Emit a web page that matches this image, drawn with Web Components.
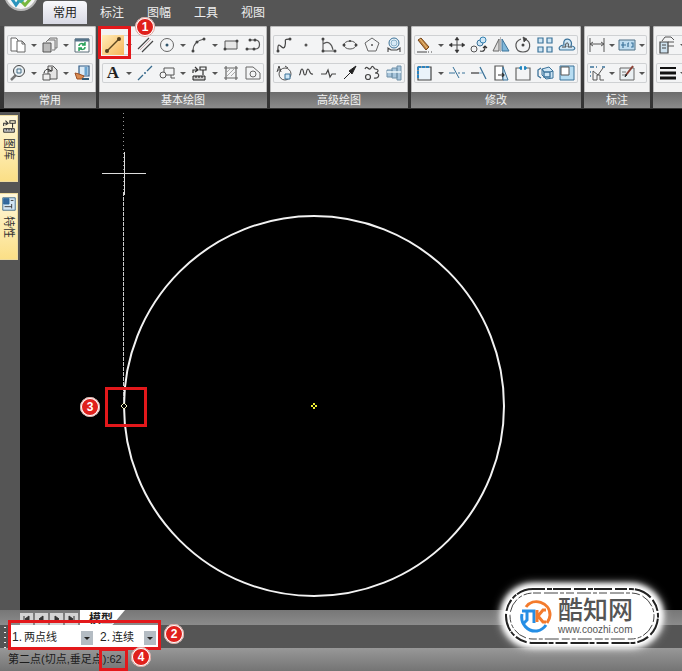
<!DOCTYPE html>
<html lang="zh-CN">
<head>
<meta charset="utf-8">
<title>CAD</title>
<style>
html,body{height:100%}
body{margin:0;background:#000;font:12px/16px "Liberation Sans","Noto Sans CJK SC",sans-serif;color:#222;overflow:hidden}
</style>
</head>
<body>
<cad-app></cad-app>
<script>
const B='#3b7299', L='#cfe6f5', K='#444';
const s=(d,c=K,w=1,f='none')=>`<path d="${d}" fill="${f}" stroke="${c}" stroke-width="${w}"/>`;
const dot=(x,y,c=K,r=1.5)=>`<circle cx="${x}" cy="${y}" r="${r}" fill="${c}"/>`;
const ICONS={
 copy:s('M2 2h5l2 2v11H2z','#666',1,'#fff')+s('M8 5h5l3 3v8H8zM13 5v3h3','#666',1,'#fff'),
 paste:s('M7 4l2-2h7v10h-3','#777',1,'#ddd')+s('M5 6l2-2h7v10h-3','#777',1,'#eee')+s('M2 7h8v9H2z','#555',1,'#bbb'),
 refresh:s('M2 3h14v13H2z','#5a6c78',1,'#fff')+s('M2 4h14','#56748a',3)+s('M6 10c0-3 4-3 6-1M12 6v3H9M12 11c0 3-4 3-6 1M6 15v-3h3','#2ba35c',1.5),
 zoom:s('M2 16l5-5','#777',2.5)+`<circle cx="10" cy="7" r="5.5" fill="#e8eff3" stroke="#444"/>`+s('M8 5h4v4H8z','#456d85'),
 pages:s('M7 2h5l4 4v9H7z','#555',1,'#e4e4e4')+s('M2 10h7v6H2z','#555',1,'#eee')+s('M3 9c1-4 4-5 7-2M11 3v4H7','#222',1),
 display:s('M6 2h10v10H6z','#315b85',1.2,'#dbeaf5')+s('M13 3v8','#6aa5d1',3)+s('M2 9l4 1 5 2-2 3H4z','#9d5025',1,'#d98b51')+s('M9 15h7','#345b77',2),
 line:s('M3 15L15 3','#5c4820',1.5)+dot(3,15,'#54401c',2)+dot(15,3,'#54401c',2),
 parallel:s('M2 13L13 2M6 16L17 5','#444',1.2)+s('M4 14L15 3','#bf8d91',.7),
 circle:`<circle cx="9" cy="9" r="6.5" fill="none" stroke="#666"/>`+dot(9,9,'#31566d'),
 arc:s('M3 15C3 8 8 4 14 3','#555',1.1)+dot(3,15)+dot(7,6)+dot(14,3),
 rect:s('M3 5h12v8H3z','#555',1,'#e7e7e7')+dot(3,13)+dot(15,5),
 poly:s('M6 4h5c6 0 6 9 0 9H3','#555',1.2)+dot(6,4)+dot(11,4)+dot(3,13)+dot(10,13),
 text:`<text x="9" y="14" text-anchor="middle" font-family="Liberation Serif,serif" font-weight="bold" font-size="17" fill="#222">A</text>`,
 center:s('M2 16L7 11M11 7l5-5','#35688b',1.3)+dot(9,9,'#35688b',1),
 block:s('M6 4h10v7H6z','#555')+`<circle cx="5" cy="11" r="3" fill="#f5f5f5" stroke="#555"/>`+s('M13 11v3h4','#555'),
 library:s('M3 12h12v4H3z','#222',1,'#ccc')+s('M3 9V6h4M5 3l3 3-3 2M10 3h6v3h-6zM13 6v5M6 12v2M9 12v2M12 12v2','#333',1.2),
 hatch:s('M4 2v14M14 2v14M2 4h14M2 14h14','#666',1.2)+s('M5 12l7-7M5 8l3-3M9 12l4-4','#888',.7),
 region:s('M2 15V3h7l7 6v6z','#666')+`<circle cx="9" cy="10" r="3" fill="none" stroke="#666"/>`,
 spline:s('M3 15C2 1 8 17 10 10S7 4 15 3','#444',1.2)+dot(3,15)+dot(15,3),
 point:dot(9,9,'#555',1.5),
 axes:s('M4 3v12h13M4 8c5-4 9 0 10 6','#555',1.1)+dot(4,3)+dot(4,15)+dot(16,15),
 ellipse:`<ellipse cx="9" cy="9" rx="6" ry="4" fill="none" stroke="#555"/>`+dot(3,9)+dot(15,9)+dot(9,5,K,1),
 pentagon:s('M9 2l7 5-3 8H5L2 7z','#666')+dot(9,9,'#555',1),
 gear:`<circle cx="9" cy="7" r="5" fill="#edf5fa" stroke="${B}"/><circle cx="9" cy="7" r="3" fill="#d7e9f5" stroke="#8ab0c7"/>`+s('M3 16v-4l3 2h6l3-2v4','#444',1.1),
 protractor:`<circle cx="10" cy="10" r="6" fill="#f5f5f5" stroke="#555"/>`+s('M10 10h5v5h-5z',B,1,L)+s('M2 8l2-6 2 6M3 6h3M10 2l3 2','#444',1),
 wave:s('M2 11c2 0 1-6 3-6s1 6 3 6 1-6 3-6 1 6 5 5','#444',1.2),
 zigzag:s('M2 10h5l2-4 2 7 2-3h4','#444',1.2),
 arrow:s('M3 15l6-6','#222',1)+s('M8 7l7-5-4 8z','#222',1,'#222'),
 squiggle:s('M2 5c2-5 4 3 6-1s3 1 4 1M12 5c5 0 3 4 0 4 6 0 4 6-1 5','#444',1.2)+`<circle cx="5" cy="13" r="2.500" fill="none" stroke="#444" stroke-width="1.2"/>`,
 shaft:s('M2 6h5v7H2zM7 4h5v10H7zM12 2h4v14h-4z','#6f90a8',1,'#a9c6dc')+s('M2 8h14','#eff8fd',1.5),
 eraser:s('M2 4l3-2 8 9-3 3z','#754519',1,'#c28643')+s('M4 3l7 9','#eac17e',1)+s('M1 16h10M12 16h1M15 16h1','#444'),
 move:s('M9 3v12M3 9h12','#444',1,'none')+s('M7 4l2-3 2 3zM7 14l2 3 2-3zM4 7L1 9l3 2zM14 7l3 2-3 2z','#333',.5,'#333'),
 duplicate:`<circle cx="4" cy="13" r="3" fill="none" stroke="#555"/><circle cx="10" cy="7" r="3" fill="${L}" stroke="${B}"/><circle cx="13" cy="4" r="3" fill="${L}" stroke="#3482b2"/>`+s('M10 15c4 1 5-1 5-4M13 12l2-2 2 2','#333',1.2),
 mirror:s('M7 3v12H1z','#666',1,'#ddd')+s('M10 3v12h7z',B,1,'#7fb7da')+s('M8.5 1v15','#777',.5),
 rotate:s('M7 3C-1 6 1 16 9 16S18 6 11 3','#555',1.2)+s('M9 1l4 2-3 3z','#444',.7,'#444')+dot(9,9),
 array:s('M2 2h5v5H2zM11 2h5v5h-5zM2 11h5v5H2zM11 11h5v5h-5z',B,1.2,L),
 offset:s('M2 14h13c3-1 2-4-2-4 3-8-9-10-7-1-4 0-6 3-4 5z',B,1.2,L)+s('M4 11h4c-2-5 4-6 2 0h4','#444',1),
 scale:s('M2 3v13h13V3z','#444',1.2,'#eaf4fb')+s('M2 3h12M2 3v12','#2b83bf',2).replace('/>',' stroke-dasharray="3 1"/>'),
 trim:s('M1 9h6M10 9h2M14 9h3',B,1.2)+s('M5 3l6 11','#346f97',1),
 extend:s('M1 9h8','#444',1.3)+s('M9 9h3','#7aafd4')+s('M10 3l6 12',B,1.2),
 stretch:s('M3 2h8v14H3z','#555',1.2,'#fff')+s('M11 3l5 13h-5z',B,1,L)+s('M6 11h6M10 9l2 2-2 2','#333',1.2),
 break:s('M5 4H2v12h14V4h-3','#666',1.2)+s('M5 4h3M10 4h3M7 2v4M11 2v4','#167fba',1.5),
 explode:s('M6 5l7-2 4 4v7l-7 1-4-4z',B,1,L)+s('M8 8h6v5H8zM5 4L2 6v6l3 2M8 8L6 5M14 8l3-1',B,1.3),
 corner:s('M2 16V2h14v14z',B,1,'#b7ddf2')+s('M3 3h8v8H3z','#555',1,'#fff'),
 dim:s('M2 2v14M16 2v14M2 8h14M5 6L2 8l3 2M13 6l3 2-3 2','#555',1),
 coord:s('M1 4h16v10H1z','#4f7186',1,'#bddcf0')+s('M3 9h5M5 6v6M10 7v4M13 7h2v4h-2M10 7h1',B,1.2),
 datum:s('M5 7v9h4v-5h3v5h4M5 7l5 4 5-7','#555',1)+s('M2 3h4M8 3h1M14 3h3M2 8h1M2 12h1',B,1.5),
 edit:s('M2 4h14v12H2z','#666',1,'#eaf0f3')+s('M4 8h4M4 11h3','#777')+s('M8 11l7-9','#8c4035',2)+s('M7 13l1-3 1 1z','#333'),
 props:s('M2 6h8v11H2z','#444',1.2,'#cde1ee')+s('M4 9h4M4 12h4','#444')+s('M4 5l3-4h6l3 3M10 6h6M10 10h6','#555'),
 weight:s('M2 4h16','#111',2)+s('M2 9h16','#111',3)+s('M2 14h16','#111',3),
 sheet:s('M2 2h14v14H2z','#3b6485',1,'#d3e6f4')+s('M3 3h6v6H3z','#24669b',1,'#36689d')+s('M11 5h3M4 12h8M12 9v5','#333')
};
const svg=(n,z=18)=>`<svg width="${z}" height="${z}" viewBox="0 0 18 18" aria-hidden="true">${ICONS[n]||''}</svg>`;
function define(name,render){
  customElements.define(name,class extends HTMLElement{
    connectedCallback(){ if(!this.shadowRoot) this.attachShadow({mode:'open'}).innerHTML=render(this); }
  });
}
define('tool-button',e=>`<style>
 :host{display:flex;flex:none}
 button{all:unset;box-sizing:border-box;display:grid;place-items:center;width:22px;height:20px}
 :host([compact]) button{width:20px}
 button.more{width:10px!important}
 .more::after{content:"";border:3px solid transparent;border-top-color:#555;border-bottom:0}
 :host([active]) .main{background:linear-gradient(135deg,#ffedb8,#f6b65a)}
 svg{display:block}
</style><button class="main" aria-label="${e.getAttribute('icon')}">${svg(e.getAttribute('icon'))}</button>${e.hasAttribute('menu')?'<button class="more" aria-label="更多"></button>':''}`);

define('tool-row',()=>`<style>
 :host{display:flex;align-items:center;height:20px;box-sizing:border-box;box-shadow:inset 0 0 0 1px #cfd1d3;border-radius:2px;background:#f3f4f5}
</style><slot></slot>`);

define('ribbon-panel',e=>`<style>
 :host{display:flex;flex-direction:column;flex:none;position:relative;background:#f3f3f3;border-radius:2px;box-shadow:inset 0 0 0 1px #bbb}
 .tools{display:grid;gap:8px;padding:9px 3px}
 footer{height:16px;background:linear-gradient(#6c6c6c,#8b8b8b);color:#f4f4f4;text-align:center;font-size:11px;line-height:16px}
 slot[name=mark]{display:block;position:absolute;left:-1px;top:0}
</style><div class="tools"><slot></slot></div><footer>${e.getAttribute('label')||'&nbsp;'}</footer><slot name="mark"></slot>`);

define('step-badge',()=>`<style>
 :host{display:grid;place-items:center;position:absolute;box-sizing:border-box;width:20px;height:20px;border:2px solid #fff;outline:1px solid #d9a09a;outline-offset:-1px;border-radius:50%;background:#e0201c;color:#fff;font:bold 12px/16px "Liberation Sans",sans-serif;z-index:5}
</style><slot></slot>`);

define('mark-box',()=>`<style>
 :host{display:block;position:absolute;box-sizing:border-box;border:3px solid #e3181b;pointer-events:none;z-index:4}
</style>`);

define('app-header',()=>`<style>
 :host{display:flex;position:relative;height:26px;background:#555;overflow:hidden;flex:none}
 .orb{position:absolute;left:3px;top:-24px}
 nav{display:flex;gap:3px;padding:1px 0 0 43px}
 button{all:unset;width:44px;height:23px;line-height:24px;text-align:center;color:#eee;font-size:12px}
 button[aria-selected=true]{background:linear-gradient(#f8f8fb,#d8d9e4);color:#222;border-radius:4px 4px 0 0}
</style><svg class="orb" width="36" height="36" aria-hidden="true"><circle cx="18" cy="18" r="16" fill="#f4f5f5" stroke="#b7b7b7" stroke-width="2"/><path d="M7 20l6 9 6-8" fill="none" stroke="#2a94bd" stroke-width="3"/><path d="M17 24l5 5 8-9" fill="none" stroke="#78b83e" stroke-width="3"/><path d="M13 22l5 4 5-5" fill="none" stroke="#39a8a2" stroke-width="2"/></svg>
<nav role="tablist"><button role="tab" aria-selected="true">常用</button><button role="tab">标注</button><button role="tab">图幅</button><button role="tab">工具</button><button role="tab">视图</button></nav>`);

const row=(t,c='')=>`<tool-row>${t.split(' ').map(n=>{const m=n.endsWith('+'),a=n.startsWith('*');return `<tool-button icon="${n.replace(/[+*]/g,'')}" ${m?'menu':''} ${a?'active':''} ${c}></tool-button>`}).join('')}</tool-row>`;
define('app-ribbon',()=>`<style>
 :host{display:flex;gap:3px;padding:0 0 4px 4px;background:linear-gradient(#4b4b4b,#333 96%,#000 97%);flex:none}
 mark-box{width:33px;height:33px}
 step-badge{left:37px;top:-9px}
</style>
<ribbon-panel label="常用">${row('copy+ paste+ refresh')}${row('zoom+ pages+ display')}</ribbon-panel>
<ribbon-panel label="基本绘图">${row('*line+ parallel circle+ arc+ rect poly')}${row('text+ center block+ library+ hatch region')}<mark-box slot="mark"></mark-box><step-badge slot="mark">1</step-badge></ribbon-panel>
<ribbon-panel label="高级绘图">${row('spline point axes ellipse pentagon gear')}${row('protractor wave zigzag arrow squiggle shaft')}</ribbon-panel>
<ribbon-panel label="修改">${row('eraser+ move duplicate mirror rotate array offset')}${row('scale+ trim extend stretch break explode corner')}</ribbon-panel>
<ribbon-panel label="标注">${row('dim+ coord+','compact')}${row('datum+ edit+','compact')}</ribbon-panel>
<ribbon-panel>${row('props+ copy')}${row('weight+ copy')}</ribbon-panel>`);

define('side-tabs',()=>`<style>
 :host{display:flex;flex-direction:column;gap:11px;width:20px;box-sizing:border-box;padding:3px 2px 0 0;background:#555;flex:none}
 button{all:unset;box-sizing:border-box;height:67px;display:flex;flex-direction:column;align-items:center;gap:4px;padding-top:2px;background:linear-gradient(#fff8dc,#fbdf86);border:1px solid #eedb9d;border-left:0;font-size:11px;line-height:16px;color:#333}
 span{writing-mode:vertical-rl;text-orientation:sideways}
</style><button>${svg('library',16)}<span>图库</span></button><button>${svg('sheet',16)}<span>特性</span></button>`);

define('drawing-canvas',()=>`<style>
 :host{display:block;position:relative;flex:1;min-width:0;background:#000;overflow:hidden}
 svg{position:absolute;inset:0;width:100%;height:100%}
 mark-box{left:85px;top:275px;width:42px;height:40px}
 step-badge{left:60px;top:285px}
</style><svg role="img" aria-label="绘图区">
<circle cx="294" cy="294" r="190" fill="none" stroke="#f2f2f2" stroke-width="2"/>
<path d="M103.500 1V80" stroke="#999" stroke-dasharray="1 3"/>
<path d="M103.500 80V294" stroke="#ccc" stroke-dasharray="4 1"/>
<path d="M82 61.500h44M104.500 40v43" stroke="#ddd"/>
<path d="M291 294h2m2 0h2m-3-3v2m0 2v2" stroke="#ee3" stroke-width="2"/>
<path d="M101 294l3-3 3 3-3 3z" fill="#000" stroke="#eeb"/>
</svg><mark-box></mark-box><step-badge>3</step-badge>`);

define('model-tabs',()=>`<style>
 :host{display:flex;height:15px;padding-left:20px;background:linear-gradient(#777,#8b8b8b);overflow:hidden;flex:none}
 nav{display:flex;gap:2px;padding:3px 2px 0 0}
 button{all:unset}
 nav button{display:grid;place-items:center;width:13px;height:12px;background:#d4d4d4}
 .tab{width:45px;padding-left:9px;box-sizing:border-box;background:#fff;clip-path:polygon(0 0,100% 0,72% 100%,0 100%);font-weight:bold;font-size:12px;line-height:18px;white-space:nowrap}
</style><nav>${['M3 2v6M8 2L4 5l4 3z','M7 2L3 5l4 3z','M4 2l4 3-4 3z','M3 2l4 3-4 3zM8 2v6'].map((d,i)=>`<button aria-label="${['首页','上一页','下一页','末页'][i]}"><svg width="11" height="10"><path d="${d}" fill="#333" stroke="#333"/></svg></button>`).join('')}</nav><button class="tab">模型</button>`);

define('command-bar',()=>`<style>
 :host{display:flex;position:relative;height:23px;background:#555;flex:none}
 .grip{width:10px;background:radial-gradient(circle,#eee 1px,transparent 1px) 0 0/10px 5px}
 .opts{display:flex;align-items:center;background:#fff;padding:0 3px 0 2px;gap:7px}
 label{display:flex;align-items:center;gap:2px}
 select{appearance:none;border:0;border-radius:0;margin:0;padding:0;height:20px;font:11px/20px "Liberation Sans","Noto Sans CJK SC",sans-serif;color:#222;background:#fff;width:69px}
 .s{width:44px}
 .wrap{position:relative;display:flex}
 .wrap::before{content:"";position:absolute;right:0;top:4px;width:12px;height:14px;background:#b4bcc3;pointer-events:none}
 .wrap::after{content:"";position:absolute;right:3px;top:10px;border:3px solid transparent;border-top-color:#222;border-bottom:0;pointer-events:none}
 mark-box{left:8px;top:-5px;width:153px;height:30px}
 step-badge{left:164px;top:-1px}
</style><div class="grip"></div><div class="opts"><label>1.<span class="wrap"><select><option>两点线</option></select></span></label><label>2.<span class="wrap"><select class="s"><option>连续</option></select></span></label></div><mark-box></mark-box><step-badge>2</step-badge>`);

define('status-bar',()=>`<style>
 :host{display:block;position:relative;height:23px;box-sizing:border-box;padding-left:8px;font-size:11px;line-height:23px;background:linear-gradient(#989898,#747474);color:#1c1c1c;flex:none}
 mark-box{left:99px;top:0;width:29px;height:23px}
 step-badge{left:131px;top:-1px}
</style>第二点(切点,垂足点):62<mark-box></mark-box><step-badge>4</step-badge>`);

define('site-watermark',()=>`<style>
 :host{display:flex;align-items:center;gap:6px;position:absolute;right:22px;bottom:26px;box-sizing:border-box;width:156px;height:58px;padding-left:16px;border-radius:29px;background:#fff;box-shadow:0 0 5px 3px #fff,0 0 9px 4px #ccc;color:#555;z-index:6}
 .ring{position:absolute;inset:0;width:100%;height:100%}
 .text{display:grid;position:relative}
 b{font:bold 25px/28px "Liberation Sans","Noto Sans CJK SC",sans-serif;font-weight:500}
 a{font:10px/12px "Liberation Sans",sans-serif;color:#555;text-decoration:none}
</style><svg class="ring" viewBox="0 0 156 58" preserveAspectRatio="none" aria-hidden="true"><rect x="2" y="2" width="152" height="54" rx="27" fill="none" stroke="#222" stroke-width="2" stroke-dasharray="12 2 5 1 18 3"/><rect x="6" y="6" width="144" height="46" rx="23" fill="none" stroke="#444" stroke-dasharray="8 3 14 2 4 2"/></svg>
<svg width="32" height="34" viewBox="0 0 32 34" aria-hidden="true" style="position:relative"><path d="M6 8C13-2 30 3 30 16c0 3-1 5-3 8" fill="none" stroke="#f37b2d" stroke-width="3"/><path d="M2 15C0 25 8 33 17 32c5-1 7-3 9-6" fill="none" stroke="#258ee5" stroke-width="3"/><path d="M2 12h12v12M7 13v8l-4 4" fill="none" stroke="#258ee5" stroke-width="3"/><path d="M17 11v12M26 11h-3l-5 6 5 6h3" fill="none" stroke="#f37b2d" stroke-width="3"/></svg>
<div class="text"><b>酷知网</b><a href="#">www.coozhi.com</a></div>`);

define('cad-app',()=>`<style>
 :host{display:flex;flex-direction:column;position:relative;height:100vh;overflow:hidden}
 main{display:flex;flex:1;min-height:0}
</style><app-header></app-header><app-ribbon></app-ribbon><main><side-tabs></side-tabs><drawing-canvas></drawing-canvas></main><model-tabs></model-tabs><command-bar></command-bar><status-bar></status-bar><site-watermark></site-watermark>`);
</script>
</body>
</html>
